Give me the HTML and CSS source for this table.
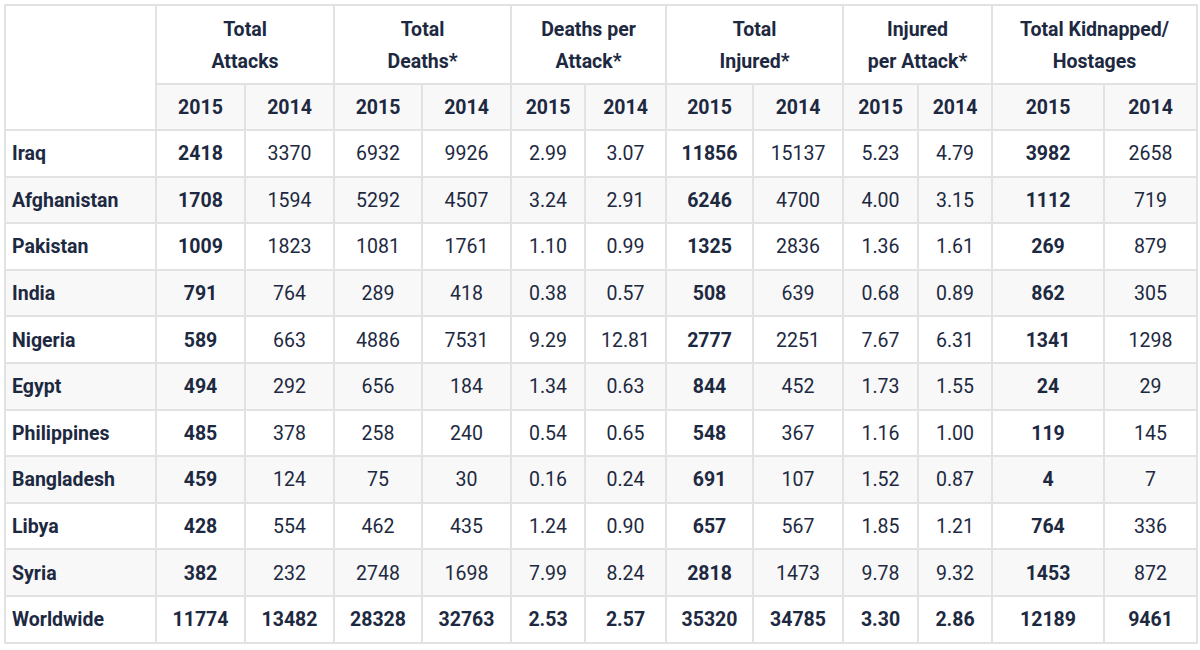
FILE: index.html
```html
<!DOCTYPE html>
<html>
<head>
<meta charset="utf-8">
<link rel="stylesheet" href="styles.css">
</head>
<body>
<div class="wrap">
<table class="stats">
  <colgroup>
    <col class="c-country">
    <col class="c-a1"><col class="c-a2">
    <col class="c-d1"><col class="c-d2">
    <col class="c-p1"><col class="c-p2">
    <col class="c-i1"><col class="c-i2">
    <col class="c-q1"><col class="c-q2">
    <col class="c-k1"><col class="c-k2">
  </colgroup>
  <thead>
    <tr class="group">
      <th rowspan="2" class="blank"></th>
      <th colspan="2">Total<br>Attacks</th>
      <th colspan="2">Total<br>Deaths*</th>
      <th colspan="2">Deaths per<br>Attack*</th>
      <th colspan="2">Total<br>Injured*</th>
      <th colspan="2">Injured<br>per Attack*</th>
      <th colspan="2">Total Kidnapped/<br>Hostages</th>
    </tr>
    <tr class="years">
      <th>2015</th><th>2014</th><th>2015</th><th>2014</th><th>2015</th><th>2014</th>
      <th>2015</th><th>2014</th><th>2015</th><th>2014</th><th>2015</th><th>2014</th>
    </tr>
  </thead>
  <tbody>
    <tr><td class="name">Iraq</td><td class="b">2418</td><td>3370</td><td>6932</td><td>9926</td><td>2.99</td><td>3.07</td><td class="b">11856</td><td>15137</td><td>5.23</td><td>4.79</td><td class="b">3982</td><td>2658</td></tr>
    <tr><td class="name">Afghanistan</td><td class="b">1708</td><td>1594</td><td>5292</td><td>4507</td><td>3.24</td><td>2.91</td><td class="b">6246</td><td>4700</td><td>4.00</td><td>3.15</td><td class="b">1112</td><td>719</td></tr>
    <tr><td class="name">Pakistan</td><td class="b">1009</td><td>1823</td><td>1081</td><td>1761</td><td>1.10</td><td>0.99</td><td class="b">1325</td><td>2836</td><td>1.36</td><td>1.61</td><td class="b">269</td><td>879</td></tr>
    <tr><td class="name">India</td><td class="b">791</td><td>764</td><td>289</td><td>418</td><td>0.38</td><td>0.57</td><td class="b">508</td><td>639</td><td>0.68</td><td>0.89</td><td class="b">862</td><td>305</td></tr>
    <tr><td class="name">Nigeria</td><td class="b">589</td><td>663</td><td>4886</td><td>7531</td><td>9.29</td><td>12.81</td><td class="b">2777</td><td>2251</td><td>7.67</td><td>6.31</td><td class="b">1341</td><td>1298</td></tr>
    <tr><td class="name">Egypt</td><td class="b">494</td><td>292</td><td>656</td><td>184</td><td>1.34</td><td>0.63</td><td class="b">844</td><td>452</td><td>1.73</td><td>1.55</td><td class="b">24</td><td>29</td></tr>
    <tr><td class="name">Philippines</td><td class="b">485</td><td>378</td><td>258</td><td>240</td><td>0.54</td><td>0.65</td><td class="b">548</td><td>367</td><td>1.16</td><td>1.00</td><td class="b">119</td><td>145</td></tr>
    <tr><td class="name">Bangladesh</td><td class="b">459</td><td>124</td><td>75</td><td>30</td><td>0.16</td><td>0.24</td><td class="b">691</td><td>107</td><td>1.52</td><td>0.87</td><td class="b">4</td><td>7</td></tr>
    <tr><td class="name">Libya</td><td class="b">428</td><td>554</td><td>462</td><td>435</td><td>1.24</td><td>0.90</td><td class="b">657</td><td>567</td><td>1.85</td><td>1.21</td><td class="b">764</td><td>336</td></tr>
    <tr><td class="name">Syria</td><td class="b">382</td><td>232</td><td>2748</td><td>1698</td><td>7.99</td><td>8.24</td><td class="b">2818</td><td>1473</td><td>9.78</td><td>9.32</td><td class="b">1453</td><td>872</td></tr>
    <tr class="total"><td class="name">Worldwide</td><td>11774</td><td>13482</td><td>28328</td><td>32763</td><td>2.53</td><td>2.57</td><td>35320</td><td>34785</td><td>3.30</td><td>2.86</td><td>12189</td><td>9461</td></tr>
  </tbody>
</table>
</div>
</body>
</html>
```
FILE: styles.css
```css
html, body {
  margin: 0;
  padding: 0;
  background: #ffffff;
}
.wrap {
  padding: 4px;
}
.stats {
  width: 1192px;
  table-layout: fixed;
  border-collapse: collapse;
  font-family: Roboto, "Liberation Sans", sans-serif;
  font-size: 19.5px;
  color: #1d2941;
}
.c-country { width: 151px; }
.c-a1, .c-a2 { width: 89px; }
.c-d1 { width: 88px; }
.c-d2 { width: 89px; }
.c-p1 { width: 74px; }
.c-p2 { width: 81px; }
.c-i1 { width: 87px; }
.c-i2 { width: 90px; }
.c-q1 { width: 75px; }
.c-q2 { width: 74px; }
.c-k1 { width: 112px; }
.c-k2 { width: 93px; }
.stats th, .stats td {
  border: 2px solid #e2e2e2;
  padding: 0;
  text-align: center;
  vertical-align: middle;
}
.stats th {
  font-weight: 700;
}
.group th {
  height: 75px;
  padding-top: 2px;
  line-height: 32px;
  background: #ffffff;
}
.years th {
  height: 44px;
  background: #f8f8f8;
}
.stats td {
  height: 43.6px;
  padding-top: 1px;
  font-weight: 400;
}
.stats tbody tr:nth-child(even) td {
  background: #f8f8f8;
}
.stats td.name {
  text-align: left;
  padding-left: 6px;
  font-weight: 700;
}
.stats td.b {
  font-weight: 700;
}
.stats tr.total td {
  font-weight: 700;
}
```
